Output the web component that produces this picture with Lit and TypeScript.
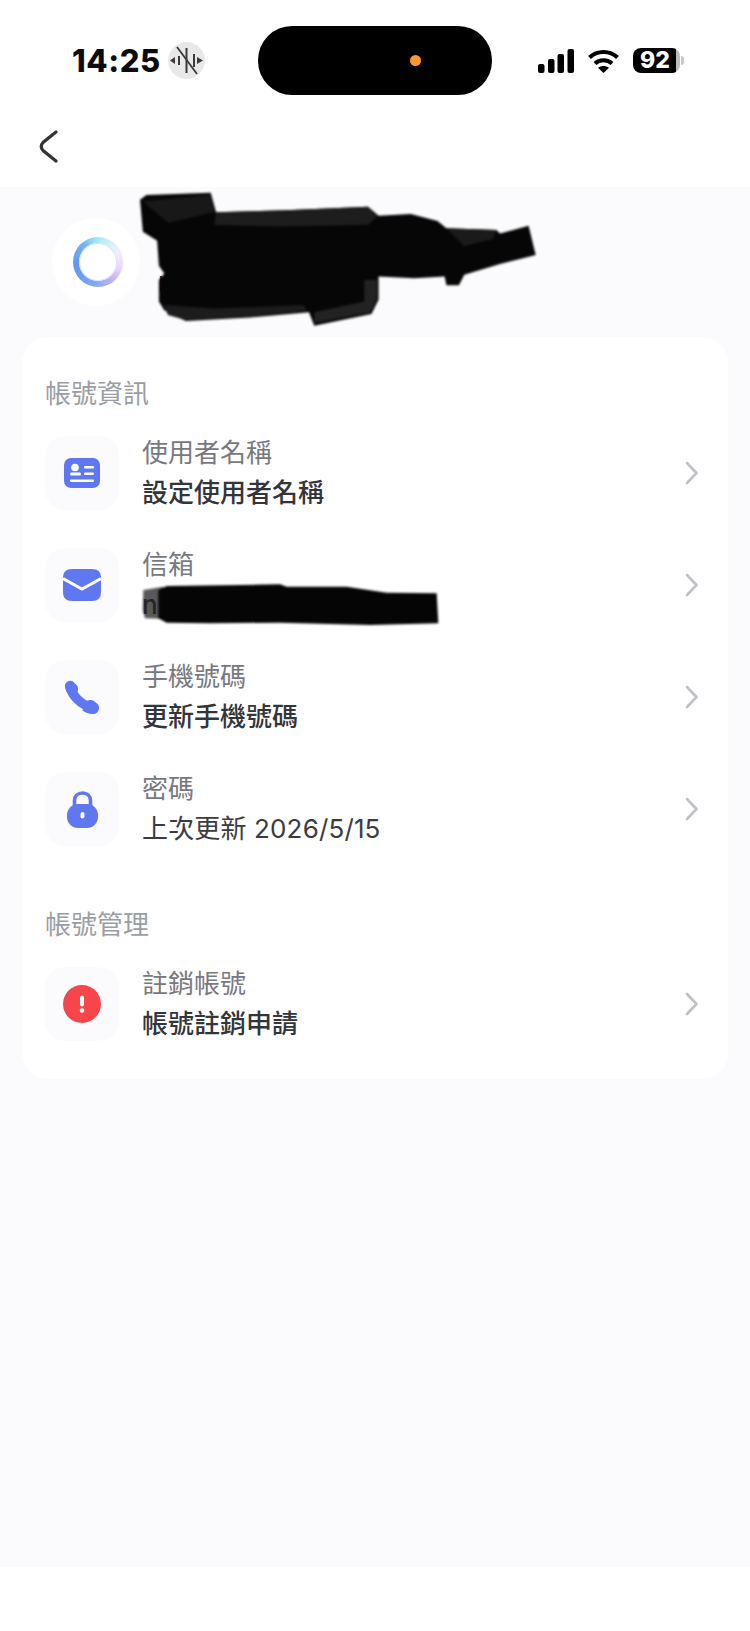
import { LitElement, html, css, svg } from "lit";
import { customElement } from "lit/decorators.js";

const cardIcon = html`<svg width="36" height="30" viewBox="0 0 36 30">
  <rect width="36" height="30" rx="7" fill="#5f78f2" />
  <circle cx="11" cy="9.500" r="3.800" fill="#fff" />
  <rect x="6" y="14.500" width="11" height="3" rx="1.500" fill="#fff" />
  <rect x="20" y="8" width="10" height="2.600" rx="1.300" fill="#fff" />
  <rect x="20" y="14.500" width="10" height="2.600" rx="1.300" fill="#fff" />
  <rect x="6" y="21.500" width="24" height="2.600" rx="1.300" fill="#fff" />
</svg>`;

const mailIcon = html`<svg width="38" height="32" viewBox="0 0 38 32">
  <path d="M0 9C0 3 3 0 9 0H29C35 0 38 3 38 9V23C38 29 35 32 29 32H9C3 32 0 29 0 23Z" fill="#5f78f2" />
  <path d="M0 9.500L19 20L38 9.500" fill="none" stroke="#fff" stroke-width="3" />
</svg>`;

const phoneIcon = html`<svg width="36" height="35" viewBox="0 0 36 35">
  <path d="M6 6C8 16 17 25 29 28" fill="none" stroke="#5f78f2" stroke-width="9.500" stroke-linecap="round" />
  <path d="M1 6.500C1 2 5.500-.5 9 1.500L12.500 5C14.500 7 14.500 10 13 13L6.500 17C3 13 1 10 1 6.500Z" fill="#5f78f2" />
  <path d="M22 21.500C25 19.500 27.500 19.500 30 21L34 24.500C36.500 27.500 34.500 33 30 34C26 34.500 22 33 18.500 30.500Z" fill="#5f78f2" />
</svg>`;

const lockIcon = html`<svg width="31" height="37" viewBox="0 0 31 37">
  <path d="M7.500 16V9.500C7.500 5 11 2 15.500 2S23.500 5 23.500 9.500V16" fill="none" stroke="#5f78f2" stroke-width="3.600" />
  <rect y="13" width="31" height="24" rx="11" fill="#5f78f2" />
  <rect x="13.500" y="21" width="4" height="6.500" rx="2" fill="#fff" />
</svg>`;

const alertIcon = html`<svg width="38" height="38" viewBox="0 0 38 38">
  <circle cx="19" cy="19" r="19" fill="#f6464b" />
  <rect x="17" y="10.500" width="4" height="11" rx="2" fill="#fff" />
  <circle cx="19" cy="25.500" r="2.200" fill="#fff" />
</svg>`;

const chevron = html`<svg class="chevron" width="14" height="24" viewBox="0 0 14 24">
  <path d="M2 2L11.500 12L2 22" fill="none" stroke="#bfc1c6" stroke-width="2.600" stroke-linecap="round" stroke-linejoin="round" />
</svg>`;

const info = [
  { icon: cardIcon, label: "使用者名稱", value: "設定使用者名稱" },
  { icon: mailIcon, label: "信箱", value: "n", hidden: true },
  { icon: phoneIcon, label: "手機號碼", value: "更新手機號碼" },
  { icon: lockIcon, label: "密碼", value: "上次更新 2026/5/15", regular: true },
];

const manage = [{ icon: alertIcon, label: "註銷帳號", value: "帳號註銷申請" }];

@customElement("app-root")
export class AppRoot extends LitElement {
  static styles = css`
    :host {
      display: block;
      position: relative;
      width: 750px;
      height: 1631px;
      background: #fff;
      overflow: hidden;
      font-family: Inter, "Noto Sans CJK TC", sans-serif;
    }

    /* ---- status bar ---- */
    .status {
      display: grid;
      grid-template-columns: 258px 234px 1fr;
      height: 69px;
      padding-top: 26px;
      align-items: center;
    }

    .status-left {
      display: flex;
      align-items: center;
      gap: 7px;
      padding-left: 72px;
    }

    .time {
      font-size: 31px;
      font-weight: 800;
      letter-spacing: 0.6px;
      color: #0c0c0c;
      line-height: 36px;
    }

    .audio {
      width: 37px;
      height: 37px;
      border-radius: 50%;
      background: #e8e8e8;
      display: flex;
      align-items: center;
      justify-content: center;
    }

    .island {
      height: 69px;
      border-radius: 34px;
      background: #000;
      display: flex;
      align-items: center;
      justify-content: flex-end;
      padding-right: 71px;
    }

    .dot {
      width: 11px;
      height: 11px;
      border-radius: 50%;
      background: #fb9a2d;
    }

    .status-right {
      display: flex;
      align-items: center;
      padding-left: 46px;
      gap: 14px;
    }

    .battery {
      position: relative;
      width: 47px;
      height: 25px;
      border-radius: 8px;
      background: linear-gradient(90deg, #000 92%, #bdbdbd 92%);
      color: #fff;
      font-size: 23px;
      font-weight: 800;
      line-height: 25px;
      text-align: center;
      padding-right: 3px;
      box-sizing: border-box;
    }

    .nub {
      position: absolute;
      right: -4px;
      top: 8px;
      width: 3px;
      height: 9px;
      border-radius: 0 3px 3px 0;
      background: #c9c9c9;
    }

    .nav {
      height: 92px;
      box-sizing: border-box;
      display: flex;
      align-items: center;
      padding: 10px 0 0 38px;
    }

    /* ---- main area ---- */
    .main {
      height: 1380px;
      background: #fbfbfe;
      padding: 0 22px;
      box-sizing: border-box;
    }

    .profile {
      position: relative;
      height: 150px;
      display: flex;
      align-items: center;
      gap: 18px;
      padding-left: 30px;
    }

    .avatar {
      width: 88px;
      height: 88px;
      border-radius: 50%;
      background: #fff;
      display: flex;
      align-items: center;
      justify-content: center;
    }

    .ring {
      width: 50px;
      height: 50px;
      margin-left: 4px;
      border-radius: 50%;
      background: conic-gradient(#a5ecf2 0deg, #d9f2f8 40deg, #f4ecfb 70deg, #ecd4f8 105deg, #c0aef5 145deg, #7ea8f5 190deg, #6496f0 260deg, #72b2f3 320deg, #a5ecf2 360deg);
      display: flex;
      align-items: center;
      justify-content: center;
      filter: blur(0.5px);
    }

    .ring-hole {
      width: 38px;
      height: 38px;
      margin-left: -1px;
      border-radius: 50%;
      background: #fff;
      box-shadow: inset 0 0 0 1px #d5e2fa;
    }

    .name {
      font-size: 26px;
      line-height: 40px;
      color: #2f3136;
    }

    .scribble {
      position: absolute;
      left: -22px;
      top: -7px;
      filter: blur(1.2px);
    }

    .card {
      background: #fff;
      border-radius: 26px;
      padding: 37px 29px 38px 23px;
    }

    .section {
      font-size: 26px;
      line-height: 40px;
      color: #9b9da4;
      margin-bottom: 22px;
    }

    .section.second {
      margin-top: 59px;
    }

    .rows {
      display: flex;
      flex-direction: column;
      gap: 38px;
    }

    .row {
      position: relative;
      height: 74px;
      display: flex;
      align-items: center;
      gap: 23px;
    }

    .icon-box {
      width: 74px;
      height: 74px;
      flex: none;
      border-radius: 20px;
      background: #fbfbfe;
      display: flex;
      align-items: center;
      justify-content: center;
    }

    .text {
      flex: 1;
      font-size: 26px;
      line-height: 40px;
    }

    .label {
      color: #77797f;
    }

    .value {
      color: #33353a;
      font-weight: 500;
    }

    .value.regular {
      font-weight: 400;
      letter-spacing: 0.15px;
      color: #3a3c41;
    }

    .mask {
      position: absolute;
      left: 85px;
      top: 22px;
      filter: blur(0.8px);
    }
  `;

  renderRow(r: { icon: unknown; label: string; value: string; hidden?: boolean; regular?: boolean }) {
    return html`
      <div class="row">
        <div class="icon-box">${r.icon}</div>
        <div class="text">
          <div class="label">${r.label}</div>
          <div class="value ${r.regular ? "regular" : ""}">${r.value}</div>
        </div>
        ${chevron}
        ${r.hidden
          ? html`<svg class="mask" width="320" height="70" viewBox="0 0 960 210">
              <path d="M40 60L100 50L100 146L45 145L38 120Z" fill="#222" fill-opacity="0.75" />
              <path d="M85 60L110 48L450 43L470 50L650 50L770 68L920 70L925 160L720 165L450 158L240 160L110 158L85 145Z" fill="#050505" />
            </svg>`
          : ""}
      </div>
    `;
  }

  render() {
    return html`
      <div class="status">
        <div class="status-left">
          <span class="time">14:25</span>
          <span class="audio">
            <svg width="35" height="33" viewBox="0 0 35 33" fill="#3a3a3a">
              <path d="M1 16.500L6 13V20Z" />
              <path d="M34 16.500L28 13V20Z" />
              <rect x="9" y="12" width="2" height="9" />
              <rect x="16.500" y="4" width="2" height="25" />
              <rect x="24" y="10" width="2" height="13" />
              <path d="M8 3L28 30" stroke="#3a3a3a" stroke-width="1.800" />
            </svg>
          </span>
        </div>
        <div class="island"><span class="dot"></span></div>
        <div class="status-right">
          <svg width="36" height="24" viewBox="0 0 36 24" fill="#000">
            <rect x="0" y="15" width="6.500" height="9" rx="2" />
            <rect x="10" y="10" width="6.500" height="14" rx="2" />
            <rect x="19.500" y="5" width="6.500" height="19" rx="2" />
            <rect x="29.500" y="0" width="6.500" height="24" rx="2" />
          </svg>
          <svg width="31" height="24" viewBox="0 0 31 24" fill="none" stroke="#000" stroke-width="4">
            <path d="M1.500 8.500C9 1 22 1 29.500 8.500" />
            <path d="M7 14.500C11.500 10.300 19.500 10.300 24 14.500" />
            <path d="M15.500 24L10 18.800C13.500 16.300 17.500 16.300 21 18.800Z" fill="#000" stroke="none" />
          </svg>
          <div class="battery">92<span class="nub"></span></div>
        </div>
      </div>
      <div class="nav">
        <svg width="20" height="33" viewBox="0 0 20 33">
          <path d="M18 2L5 12.500Q1.500 16.500 5 20.500L18 31" fill="none" stroke="#333" stroke-width="3.200" stroke-linecap="round" />
        </svg>
      </div>
      <div class="main">
        <div class="profile">
          <div class="avatar"><div class="ring"><div class="ring-hole"></div></div></div>
          <div class="name">n<br />n</div>
          <svg class="scribble" width="560" height="170" viewBox="0 0 1568 476">
            ${svg`<path
              d="M392 55L410 42L590 36L605 90L800 85L1030 75L1060 100L1150 95L1225 115L1250 135L1390 140L1400 150L1480 128L1500 210L1400 235L1300 265L1285 295L1250 295L1245 270L1160 275L1060 270L1060 335L1040 375L880 408L865 370L700 385L520 395L460 365L445 340L445 280L460 262L445 240L440 170L400 145Z"
              fill="#060606"
            />
            <path d="M605 90L800 85L1030 75L1060 100L1030 125L780 130L600 125Z" fill="#1d1d1d" />
            <path d="M400 60L590 40L600 90L470 120Z" fill="#181818" />
            <path d="M470 378L520 392L700 383L860 366L850 350L600 360L460 350Z" fill="#1c1c1c" />
            <path d="M880 400L1035 372L1055 335L1055 280L1020 280L1020 340L880 370Z" fill="#222" />
            <path d="M1250 135L1390 140L1380 165L1300 185Z" fill="#1a1a1a" />`}
          </svg>
        </div>
        <div class="card">
          <div class="section">帳號資訊</div>
          <div class="rows">${info.map((r) => this.renderRow(r))}</div>
          <div class="section second">帳號管理</div>
          <div class="rows">${manage.map((r) => this.renderRow(r))}</div>
        </div>
      </div>
    `;
  }
}
